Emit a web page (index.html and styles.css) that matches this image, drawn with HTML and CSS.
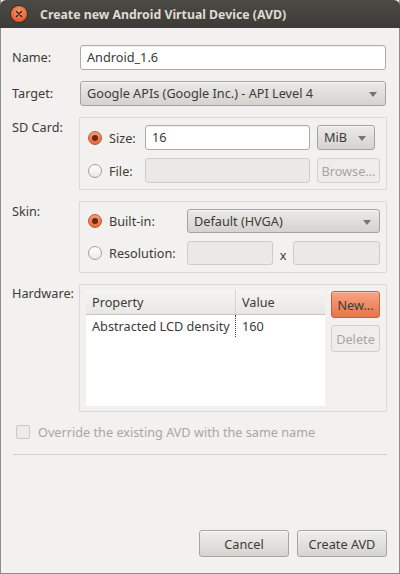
FILE: index.html
```html
<!DOCTYPE html>
<html>
<head>
<meta charset="utf-8">
<link rel="stylesheet" href="styles.css">
</head>
<body>
<div class="window">
  <div class="titlebar">
    <span class="close"><svg width="8" height="8" viewBox="0 0 8 8"><path d="M1.5 1.5 L6.5 6.5 M6.5 1.5 L1.5 6.5" stroke="#3a1a0e" stroke-width="1.4" stroke-linecap="round"/></svg></span>
    <span class="title">Create new Android Virtual Device (AVD)</span>
  </div>
  <div class="content">
    <div class="form">
      <div class="label lab-name">Name:</div>
      <div class="field"><div class="entry">Android_1.6</div></div>

      <div class="label lab-target">Target:</div>
      <div class="field"><div class="combo">Google APIs (Google Inc.) - API Level 4<span class="arrow"></span></div></div>

      <div class="label lab-group">SD Card:</div>
      <div class="group sd">
        <label class="radio-l"><span class="radio on"></span>Size:</label>
        <div class="entry">16</div>
        <div class="combo small">MiB<span class="arrow"></span></div>
        <label class="radio-l"><span class="radio"></span>File:</label>
        <div class="entry disabled"></div>
        <div class="btn disabled browse">Browse...</div>
      </div>

      <div class="label lab-group">Skin:</div>
      <div class="group skin">
        <label class="radio-l"><span class="radio on"></span>Built-in:</label>
        <div class="combo wide">Default (HVGA)<span class="arrow"></span></div>
        <label class="radio-l"><span class="radio"></span>Resolution:</label>
        <div class="res">
          <div class="entry disabled"></div>
          <span class="x">x</span>
          <div class="entry disabled"></div>
        </div>
      </div>

      <div class="label lab-group lab-hw">Hardware:</div>
      <div class="group hw">
        <div class="table">
          <div class="thead">
            <div class="th c1">Property</div>
            <div class="th c2">Value</div>
          </div>
          <div class="tr">
            <div class="td c1">Abstracted LCD density</div>
            <div class="td c2">160</div>
          </div>
        </div>
        <div class="hwbtns">
          <div class="btn orange">New...</div>
          <div class="btn disabled">Delete</div>
        </div>
      </div>
    </div>

    <div class="override"><span class="check"></span>Override the existing AVD with the same name</div>
    <div class="sep"></div>

    <div class="actions">
      <div class="btn action">Cancel</div>
      <div class="btn action">Create AVD</div>
    </div>
  </div>
</div>
</body>
</html>
```
FILE: styles.css
```css
html, body {
  margin: 0;
  padding: 0;
  background: #f2f1f0;
}
body {
  font-family: "Noto Sans", "DejaVu Sans", sans-serif;
  font-size: 12.7px;
  color: #3c3b37;
}
.window {
  width: 400px;
  height: 574px;
  box-sizing: border-box;
  border: 1px solid #8e8c88;
  border-top: none;
  background: #f2f1f0;
  display: flex;
  flex-direction: column;
}
.titlebar {
  height: 28px;
  margin: 0 -1px;
  background: linear-gradient(#4b4a45, #3c3b37);
  border-radius: 6px 6px 0 0;
  display: flex;
  align-items: center;
  flex-shrink: 0;
}
.close {
  width: 16px;
  height: 16px;
  border-radius: 50%;
  margin-left: 11px;
  background: radial-gradient(circle at 50% 35%, #f59a6f, #e35f2b 70%, #c84b1c);
  box-shadow: 0 0 0 1px #2e2d2a;
  display: flex;
  align-items: center;
  justify-content: center;
}
.title {
  margin-left: 13px;
  font-weight: bold;
  font-size: 12.3px;
  color: #dfdbd2;
}
.content {
  flex: 1;
  display: flex;
  flex-direction: column;
  padding: 17px 12px 16px 11px;
}
.form {
  display: grid;
  grid-template-columns: 67px 308px;
  row-gap: 11px;
}
.label {
  line-height: 25px;
}
.lab-group {
  line-height: 18px;
  padding-top: 1px;
}
.lab-hw { padding-top: 0; }
.field { padding: 0 1px; }
.entry {
  height: 25px;
  box-sizing: border-box;
  border: 1px solid #aeaba5;
  border-radius: 3px;
  background: #fff;
  padding: 0 6px;
  line-height: 23px;
  box-shadow: inset 0 1px 1px rgba(0,0,0,0.06);
}
.entry.disabled {
  background: #ebe9e7;
  border-color: #cfccc8;
  box-shadow: none;
}
.combo {
  position: relative;
  height: 25px;
  box-sizing: border-box;
  border: 1px solid #a6a39e;
  border-radius: 3px;
  background: linear-gradient(#eceae8, #d5d3cf);
  padding: 0 6px;
  line-height: 23px;
  box-shadow: inset 0 1px 0 rgba(255,255,255,0.6);
}
.arrow {
  position: absolute;
  right: 8px;
  top: 10px;
  width: 0;
  height: 0;
  border-left: 4px solid transparent;
  border-right: 4px solid transparent;
  border-top: 5px solid #77746f;
}
.group {
  border: 1px solid #dbd9d5;
  border-radius: 1px;
}
.sd {
  display: grid;
  grid-template-columns: 50px 165px 58px;
  grid-template-rows: 25px 25px;
  column-gap: 7px;
  row-gap: 8px;
  padding: 7px 0 6px 8px;
}
.sd .browse { width: 63px; }
.skin {
  display: grid;
  grid-template-columns: 99px 193px;
  grid-template-rows: 24px 24px;
  row-gap: 8px;
  padding: 7px 0 7px 8px;
}
.skin .combo, .skin .entry { height: 24px; line-height: 22px; }
.radio-l {
  display: flex;
  align-items: center;
  gap: 7px;
  height: 25px;
}
.skin .radio-l { height: 24px; }
.radio {
  width: 14px;
  height: 14px;
  box-sizing: border-box;
  border-radius: 50%;
  border: 1px solid #a19e99;
  background: linear-gradient(#ffffff, #ebe9e6);
  flex-shrink: 0;
  position: relative;
}
.radio.on {
  border-color: #c4562a;
  background: linear-gradient(#f79e78, #e6683a);
}
.radio.on::after {
  content: "";
  position: absolute;
  left: 3px;
  top: 3px;
  width: 6px;
  height: 6px;
  border-radius: 50%;
  background: #6a2a12;
}
.res {
  display: flex;
  align-items: center;
}
.res .entry { width: 86px; }
.res .entry:last-child { width: 87px; }
.res .x {
  width: 20px;
  text-align: center;
  padding-top: 3px;
}
.btn {
  height: 25px;
  box-sizing: border-box;
  border: 1px solid #a8a5a0;
  border-radius: 3px;
  background: linear-gradient(#efeeec, #d6d4d0);
  display: flex;
  align-items: center;
  justify-content: center;
  box-shadow: inset 0 1px 0 rgba(255,255,255,0.7);
}
.btn.disabled {
  background: #efedeb;
  border-color: #d3d0cc;
  color: #a7a49f;
  box-shadow: none;
}
.btn.orange {
  background: linear-gradient(#f8a582, #e6744a);
  border-color: #c86240;
  color: #3c3b37;
  box-shadow: inset 0 1px 0 rgba(255,255,255,0.3);
}
.hw {
  display: flex;
  padding: 5px 6px 5px 6px;
  gap: 6px;
}
.table {
  width: 239px;
  height: 116px;
  background: #fff;
}
.thead {
  display: flex;
  height: 25px;
  box-sizing: border-box;
  background: linear-gradient(#f5f4f2, #e9e7e4);
  border-bottom: 1px solid #c8c6c1;
}
.th {
  line-height: 24px;
  padding-left: 6px;
  box-sizing: border-box;
}
.th.c1 { border-right: 1px solid #d5d3cf; width: 150px; }
.tr { display: flex; }
.td {
  line-height: 22px;
  padding-left: 6px;
  box-sizing: border-box;
}
.td.c1 {
  width: 150px;
  border-right: 1px dotted #3c3b37;
}
.hwbtns {
  display: flex;
  flex-direction: column;
  gap: 7px;
  padding-top: 1px;
}
.hwbtns .btn {
  width: 49px;
  height: 27px;
}
.override {
  margin-top: 11px;
  display: flex;
  align-items: center;
  gap: 8px;
  color: #a9a6a1;
  padding-left: 4px;
}
.check {
  width: 14px;
  height: 14px;
  box-sizing: border-box;
  border: 1px solid #cbc8c3;
  border-radius: 2px;
  background: #ecebe9;
}
.sep {
  margin-top: 13px;
  height: 1px;
  background: #d3d1cd;
  margin-left: 1px;
}
.actions {
  margin-top: auto;
  display: flex;
  justify-content: flex-end;
  gap: 8px;
}
.btn.action {
  width: 90px;
  height: 27px;
}
```
